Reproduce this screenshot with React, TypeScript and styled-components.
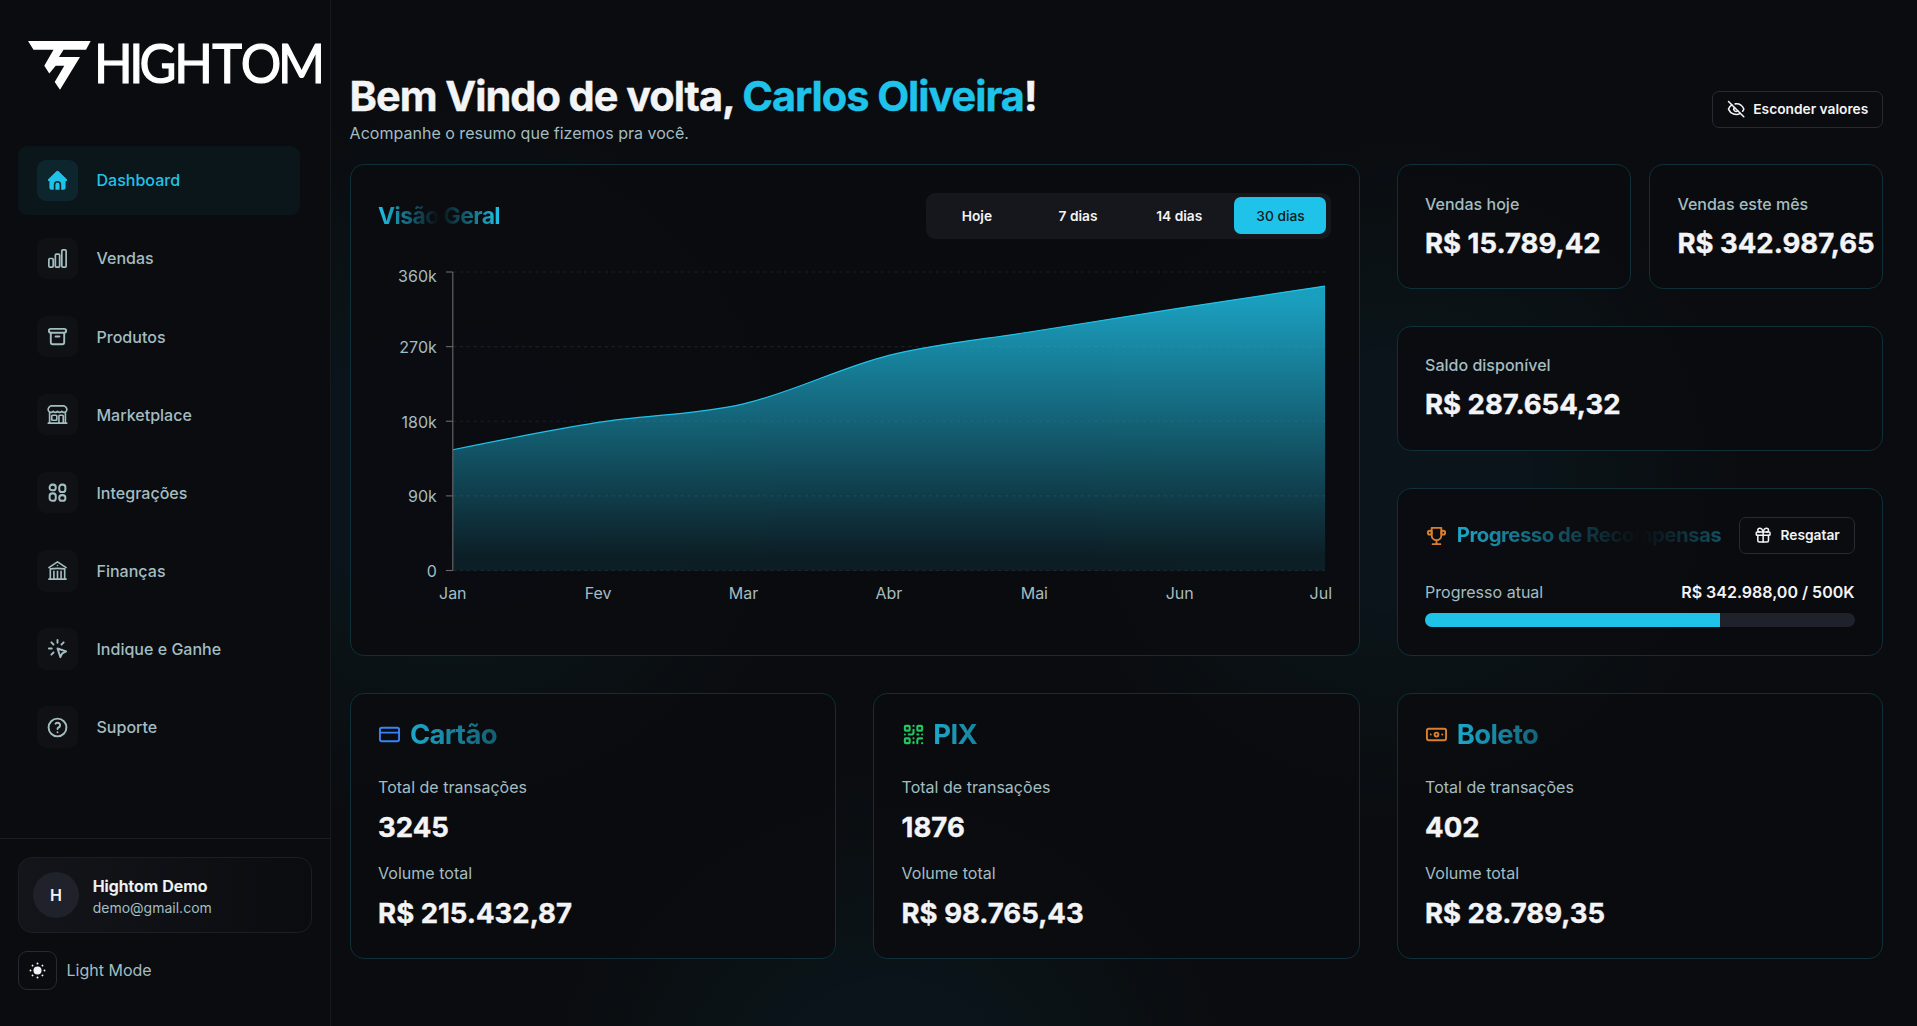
import React from 'react';
import styled, { createGlobalStyle } from 'styled-components';
import {
  HiOutlineBuildingLibrary,
  HiOutlineBuildingStorefront,
  HiOutlineChartBar,
} from 'react-icons/hi2';
import { CreditCard, EyeOff, Gift, QrCode, Banknote } from 'lucide-react';

const c = {
  bg: '#0a0c10',
  primary: '#1fc3ea',
  text: '#f3f4f6',
  muted: '#a3bdc1',
  border: '#282a34',
  cardBorder: '#0d3039',
};

const GlobalStyle = createGlobalStyle`
  * { box-sizing: border-box; }
  body {
    margin: 0;
    background: ${c.bg};
    color: ${c.text};
    font-family: Inter, 'Liberation Sans', sans-serif;
    -webkit-font-smoothing: antialiased;
    overflow: hidden;
  }
  h1, h2, p { margin: 0; }
  button { font-family: inherit; cursor: pointer; }
  svg { display: block; flex-shrink: 0; }
`;

const Shell = styled.div`
  display: flex;
  width: 100%;
  height: 1026px;
  background:
    radial-gradient(circle 340px at 890px 1111px, #0b131b 0%, #0b131b 38%, #0a1316 50%, rgba(10, 12, 16, 0) 100%),
    radial-gradient(circle 340px at 1400px 480px, #0b131b 0%, #0b131b 38%, #0a1316 50%, rgba(10, 12, 16, 0) 100%),
    radial-gradient(circle 360px at 450px 470px, #0b131b 0%, #0b131b 40%, #0a1316 52%, rgba(10, 12, 16, 0) 100%),
    ${c.bg};
`;

const Sidebar = styled.aside`
  width: 331px;
  flex-shrink: 0;
  display: flex;
  flex-direction: column;
  background: #0a0c0f;
  border-right: 1px solid #16191e;
`;

const Brand = styled.div`
  height: 146px;
  padding: 38px 0 0 26px;
`;

const Nav = styled.nav`
  flex: 1;
  display: flex;
  flex-direction: column;
  gap: 9.3px;
  padding: 0 30px 0 18px;
`;

const NavItem = styled.a<{ $active?: boolean }>`
  display: flex;
  align-items: center;
  gap: 18.4px;
  height: 68.8px;
  padding: 0 18.8px;
  border-radius: 9px;
  font-size: 16.05px;
  font-weight: 500;
  color: ${(p) => (p.$active ? c.primary : c.muted)};
  background: ${(p) => (p.$active ? '#0b161b' : 'transparent')};
`;

const NavIcon = styled.span<{ $active?: boolean }>`
  width: 41.3px;
  height: 41.3px;
  border-radius: 9px;
  display: flex;
  align-items: center;
  justify-content: center;
  background: ${(p) => (p.$active ? '#0d262e' : '#0f1115')};
`;

const SideFooter = styled.div`
  height: 188px;
  border-top: 1px solid #1b1e23;
  padding: 18px 18px 0;
`;

const UserCard = styled.div`
  display: flex;
  align-items: center;
  gap: 13.7px;
  height: 76px;
  padding: 0 14px;
  border: 1px solid #1c1e26;
  border-radius: 14px;
  background: linear-gradient(90deg, #13151a, #0a0c10);
`;

const Avatar = styled.span`
  width: 46px;
  height: 46px;
  border-radius: 50%;
  background: #20222b;
  display: flex;
  align-items: center;
  justify-content: center;
  font-size: 16px;
  font-weight: 600;
`;

const UserName = styled.p`
  padding-top: 3px;
  font-size: 16px;
  line-height: 21px;
  font-weight: 600;
  -webkit-text-stroke: 0.2px;
`;

const UserMail = styled.p`
  font-size: 14px;
  line-height: 21px;
  color: ${c.muted};
`;

const ThemeRow = styled.div`
  display: flex;
  align-items: center;
  gap: 9.5px;
  margin-top: 18px;
  font-size: 16px;
  color: ${c.muted};
`;

const ThemeLabel = styled.span`
  line-height: 20px;
  padding-bottom: 2px;
`;

const ThemeButton = styled.button`
  width: 39px;
  height: 39px;
  padding: 0;
  border: 1px solid ${c.border};
  border-radius: 9px;
  background: transparent;
  color: ${c.text};
  display: flex;
  align-items: center;
  justify-content: center;
`;

const Main = styled.main`
  flex: 1;
  padding: 73px 34px 0 18.6px;
`;

const Header = styled.header`
  display: flex;
  align-items: center;
  justify-content: space-between;
  height: 72.3px;
`;

const Title = styled.h1`
  font-size: 41.5px;
  line-height: 46px;
  font-weight: 700;
  letter-spacing: -0.025em;
  -webkit-text-stroke: 0.4px;
`;

const Accent = styled.span`
  color: ${c.primary};
`;

const Subtitle = styled.p`
  margin-top: 3px;
  font-size: 16.05px;
  line-height: 23px;
  color: ${c.muted};
`;

const OutlineButton = styled.button<{ $gap: number }>`
  height: 37px;
  display: flex;
  align-items: center;
  gap: ${(p) => p.$gap}px;
  padding: 0 13.75px;
  border: 1px solid ${c.border};
  border-radius: 7px;
  background: #0a0c10;
  color: ${c.text};
  font-size: 13.75px;
  font-weight: 600;
  white-space: nowrap;
`;

const Board = styled.div`
  display: grid;
  grid-template-columns: repeat(3, minmax(0, 1fr));
  grid-template-rows: 492px 265.5px;
  gap: 37px;
  margin-top: 19px;
`;

const Card = styled.section<{ $span?: number }>`
  grid-column: span ${(p) => p.$span ?? 1};
  min-width: 0;
  padding: 27.5px;
  border: 1px solid ${c.cardBorder};
  border-radius: 14px;
  background: rgba(10, 12, 15, 0.85);
`;

const SideStack = styled.div`
  display: grid;
  grid-template-columns: repeat(2, minmax(0, 1fr));
  grid-template-rows: 124.4px 125.6px 167.8px;
  row-gap: 37.1px;
  column-gap: 18.3px;
`;

const fade = `linear-gradient(90deg, ${c.primary}, ${c.bg} 50%, ${c.primary})`;

const FadeText = styled.span`
  color: transparent;
`;

const ChartHead = styled.div`
  display: flex;
  align-items: center;
  justify-content: space-between;
  height: 46px;
`;

const ChartTitle = styled.h2`
  font-size: 22.9px;
  line-height: 30px;
  font-weight: 700;
  letter-spacing: -0.025em;
  color: transparent;
  background: ${fade};
  background-clip: text;
`;

const Tabs = styled.div`
  display: grid;
  grid-template-columns: repeat(4, 92px);
  gap: 9.2px;
  padding: 4.6px;
  border-radius: 9px;
  background: #15171c;
`;

const Tab = styled.button<{ $active?: boolean }>`
  height: 36.7px;
  padding: 0;
  border: 0;
  border-radius: 7px;
  font-size: 13.75px;
  font-weight: ${(p) => (p.$active ? 500 : 600)};
  color: ${(p) => (p.$active ? '#0a1a20' : c.text)};
  background: ${(p) => (p.$active ? c.primary : 'transparent')};
`;

const ChartBox = styled.div`
  margin-top: 18px;
`;

const FadeRow = styled.div<{ $size: number; $height: number; $mb: number }>`
  display: flex;
  align-items: center;
  gap: 8.8px;
  height: ${(p) => p.$height}px;
  margin-bottom: ${(p) => p.$mb}px;
  font-size: ${(p) => p.$size}px;
  line-height: 1.2;
  font-weight: 700;
  letter-spacing: -0.025em;
  white-space: nowrap;
  background: ${fade};
  background-clip: text;
`;

const PushRight = styled.div`
  margin-left: auto;
  letter-spacing: 0;
`;

const Label = styled.p<{ $medium?: boolean }>`
  font-size: 16.05px;
  line-height: 23px;
  font-weight: ${(p) => (p.$medium ? 500 : 400)};
  color: ${c.muted};
`;

const Value = styled.p`
  margin-top: 9.2px;
  font-size: 27.5px;
  line-height: 36.7px;
  font-weight: 700;
  white-space: nowrap;
  -webkit-text-stroke: 0.4px;
`;

const Metric = styled.div`
  & + & { margin-top: 17px; }
`;

const MetricValue = styled(Value)`
  margin-top: 9.5px;
`;

const ProgressRow = styled.div`
  display: flex;
  justify-content: space-between;
`;

const ProgressValue = styled.span`
  font-size: 16px;
  line-height: 23px;
  font-weight: 600;
`;

const Track = styled.div`
  margin-top: 8.6px;
  height: 14px;
  border-radius: 7px;
  background: #20222b;
  overflow: hidden;
`;

const Fill = styled.div`
  height: 100%;
  background: ${c.primary};
`;

const HomeIcon = () => (
  <svg width="21" height="21" viewBox="0 0 21 21" fill="currentColor">
    <path d="M9.4 1.3a1.6 1.6 0 0 1 2.200 0l8.200 7.900c.8.8.2 1.900-.8 1.900h-.4v6.600a2 2 0 0 1-2 2h-2.400v-5a3.700 3.700 0 0 0-7.400 0v5H4.400a2 2 0 0 1-2-2v-6.600H2c-1 0-1.600-1.100-.8-1.900z" />
    <path d="M8.400 19.700v-5a2.100 2.100 0 0 1 4.200 0v5z" />
  </svg>
);

const StrokeIcon = ({ children, color = 'currentColor' }: { children: React.ReactNode; color?: string }) => (
  <svg
    width="23"
    height="23"
    viewBox="0 0 24 24"
    fill="none"
    stroke={color}
    strokeWidth="2"
    strokeLinecap="round"
    strokeLinejoin="round"
  >
    {children}
  </svg>
);

const ArchiveIcon = () => (
  <StrokeIcon>
    <rect x="3" y="4" width="18" height="4" rx="2" />
    <path d="M5 8v10a2 2 0 0 0 2 2h10a2 2 0 0 0 2-2V8" />
    <path d="M10 12h4" />
  </StrokeIcon>
);

const ClickIcon = () => (
  <StrokeIcon>
    <path d="M3 12h3M12 3v3M7.800 7.800L5.600 5.600M16.200 7.800l2.200-2.200M7.800 16.200l-2.200 2.200" />
    <path d="M12 12l9 3-4 2-2 4z" />
  </StrokeIcon>
);

const HelpIcon = () => (
  <StrokeIcon>
    <circle cx="12" cy="12" r="9.300" />
    <path d="M12 17v.01M12 13.500a1.500 1.500 0 0 1 1-1.500 2.600 2.600 0 1 0-3-4" />
  </StrokeIcon>
);

const TrophyIcon = () => (
  <StrokeIcon color="#d97f30">
    <path d="M8 21h8M12 17v4M7 4h10M17 4v8a5 5 0 0 1-10 0V4" />
    <circle cx="5" cy="9" r="2" />
    <circle cx="19" cy="9" r="2" />
  </StrokeIcon>
);

const WidgetIcon = () => (
  <svg width="21" height="21" viewBox="0 0 24 24" fill="none" stroke="currentColor" strokeWidth="2.300">
    <rect x="3" y="3" width="7" height="6.500" rx="3" />
    <rect x="14" y="3" width="7" height="8.500" rx="3" />
    <rect x="3" y="13" width="7" height="8.500" rx="3" />
    <rect x="14" y="15" width="7" height="6.500" rx="3" />
  </svg>
);

const SunIcon = () => (
  <svg width="17" height="17" viewBox="0 0 17 17" fill="currentColor">
    <circle cx="8.500" cy="8.500" r="4" />
    {[0, 45, 90, 135, 180, 225, 270, 315].map((a) => (
      <circle key={a} cx="8.500" cy="1.500" r="0.950" transform={`rotate(${a} 8.500 8.500)`} />
    ))}
  </svg>
);

const Logo = () => (
  <svg width="300" height="56" viewBox="26 38 300 56" fill="#fff">
    <path d="M28 41H90.700L86 49.700H63.500L59 57H80L60 89.800L54.700 82L64.300 65.700H55.700L49.300 73.500L44.300 65.700L53.500 49.700H33.500Z" />
    <text
      transform="translate(0 82.600) scale(0.930 1)"
      x="101.200 138.900 150 187.400 228.300 258.900 299"
      y="0"
      fontFamily="Lato, sans-serif"
      fontSize="54.500"
      stroke="#fff"
      strokeWidth="1.200"
    >
      HIGHTOM
    </text>
  </svg>
);

const navItems = [
  { label: 'Dashboard', icon: <HomeIcon />, active: true },
  { label: 'Vendas', icon: <HiOutlineChartBar size={23} strokeWidth={1.8} /> },
  { label: 'Produtos', icon: <ArchiveIcon /> },
  { label: 'Marketplace', icon: <HiOutlineBuildingStorefront size={23} strokeWidth={1.7} /> },
  { label: 'Integrações', icon: <WidgetIcon /> },
  { label: 'Finanças', icon: <HiOutlineBuildingLibrary size={23} strokeWidth={1.7} /> },
  { label: 'Indique e Ganhe', icon: <ClickIcon /> },
  { label: 'Suporte', icon: <HelpIcon /> },
];

const series = [
  { month: 'Jan', value: 145700 },
  { month: 'Fev', value: 178600 },
  { month: 'Mar', value: 201000 },
  { month: 'Abr', value: 259500 },
  { month: 'Mai', value: 288500 },
  { month: 'Jun', value: 316500 },
  { month: 'Jul', value: 342988 },
];

const plot = { left: 74.8, top: 15, width: 872.3, height: 298.5 };

/* Monotone cubic path through evenly spaced points. */
function monotonePath(pts: { x: number; y: number }[]) {
  const n = pts.length;
  const s = pts.slice(1).map((p, i) => (p.y - pts[i].y) / (p.x - pts[i].x));
  const t = pts.map((_, i) => {
    if (i === 0 || i === n - 1) return 0;
    const avg = (s[i - 1] + s[i]) / 2;
    return (Math.sign(s[i - 1]) + Math.sign(s[i])) * Math.min(Math.abs(s[i - 1]), Math.abs(s[i]), 0.5 * Math.abs(avg));
  });
  t[0] = (3 * s[0] - t[1]) / 2;
  t[n - 1] = (3 * s[n - 2] - t[n - 2]) / 2;
  return pts.slice(1).reduce((d, p, i) => {
    const q = pts[i];
    const dx = (p.x - q.x) / 3;
    return `${d}C${q.x + dx},${q.y + dx * t[i]} ${p.x - dx},${p.y - dx * t[i + 1]} ${p.x},${p.y}`;
  }, `M${pts[0].x},${pts[0].y}`);
}

const AreaChart = () => {
  const { left, top, width, height } = plot;
  const pts = series.map((d, i) => ({
    x: left + (width * i) / (series.length - 1),
    y: top + height * (1 - d.value / 360000),
  }));
  const line = monotonePath(pts);
  return (
    <svg width="956" height="366" fontSize="16" fill={c.muted}>
      <defs>
        <linearGradient id="area" x1="0" y1="0" x2="0" y2="1">
          <stop offset="5%" stopColor={c.primary} stopOpacity="0.800" />
          <stop offset="95%" stopColor={c.primary} stopOpacity="0.100" />
        </linearGradient>
      </defs>
      {[360, 270, 180, 90, 0].map((v, i) => {
        const y = top + (height * i) / 4;
        return (
          <g key={v}>
            <line x1={left} x2={left + width} y1={y} y2={y} stroke="#1c1e24" strokeWidth="1.150" strokeDasharray="3.450 3.450" />
            <line x1={left - 6.900} x2={left} y1={y} y2={y} stroke="#666" strokeWidth="1.150" />
            <text x={left - 16} y={y + (i === 0 ? 10 : 6.300)} textAnchor="end">{v ? `${v}k` : '0'}</text>
          </g>
        );
      })}
      <path d={`${line}V${top + height}H${left}Z`} fill="url(#area)" />
      <path d={line} fill="none" stroke={c.primary} strokeWidth="1.150" />
      <line x1={left} x2={left} y1={top} y2={top + height} stroke="#666" strokeWidth="1.150" />
      {pts.map((p, i) => {
        const last = i === pts.length - 1;
        return (
          <text key={series[i].month} x={last ? 954 : p.x} y="341.700" textAnchor={last ? 'end' : 'middle'}>
            {series[i].month}
          </text>
        );
      })}
    </svg>
  );
};

const methods = [
  { name: 'Cartão', icon: <CreditCard size={23} color="#3b82f6" />, count: '3245', volume: 'R$ 215.432,87' },
  { name: 'PIX', icon: <QrCode size={23} strokeWidth={2.2} color="#22c55e" />, count: '1876', volume: 'R$ 98.765,43' },
  { name: 'Boleto', icon: <Banknote size={23} color="#d97f30" />, count: '402', volume: 'R$ 28.789,35' },
];

export default function App() {
  return (
    <>
      <GlobalStyle />
      <Shell>
        <Sidebar>
          <Brand>
            <Logo />
          </Brand>
          <Nav>
            {navItems.map((item) => (
              <NavItem key={item.label} $active={item.active}>
                <NavIcon $active={item.active}>{item.icon}</NavIcon>
                {item.label}
              </NavItem>
            ))}
          </Nav>
          <SideFooter>
            <UserCard>
              <Avatar>H</Avatar>
              <div>
                <UserName>Hightom Demo</UserName>
                <UserMail>demo@gmail.com</UserMail>
              </div>
            </UserCard>
            <ThemeRow>
              <ThemeButton aria-label="Light Mode">
                <SunIcon />
              </ThemeButton>
              <ThemeLabel>Light Mode</ThemeLabel>
            </ThemeRow>
          </SideFooter>
        </Sidebar>
        <Main>
          <Header>
            <div>
              <Title>
                Bem Vindo de volta, <Accent>Carlos Oliveira</Accent>!
              </Title>
              <Subtitle>Acompanhe o resumo que fizemos pra você.</Subtitle>
            </div>
            <OutlineButton $gap={8.4}>
              <EyeOff size={18.3} />
              Esconder valores
            </OutlineButton>
          </Header>
          <Board>
            <Card $span={2}>
              <ChartHead>
                <ChartTitle>Visão Geral</ChartTitle>
                <Tabs>
                  <Tab>Hoje</Tab>
                  <Tab>7 dias</Tab>
                  <Tab>14 dias</Tab>
                  <Tab $active>30 dias</Tab>
                </Tabs>
              </ChartHead>
              <ChartBox>
                <AreaChart />
              </ChartBox>
            </Card>
            <SideStack>
              <Card>
                <Label $medium>Vendas hoje</Label>
                <Value>R$ 15.789,42</Value>
              </Card>
              <Card>
                <Label $medium>Vendas este mês</Label>
                <Value>R$ 342.987,65</Value>
              </Card>
              <Card $span={2}>
                <Label $medium>Saldo disponível</Label>
                <Value>R$ 287.654,32</Value>
              </Card>
              <Card $span={2}>
                <FadeRow $size={20.35} $height={36.7} $mb={27.4}>
                  <TrophyIcon />
                  <FadeText>Progresso de Recompensas</FadeText>
                  <PushRight>
                    <OutlineButton $gap={8.6}>
                      <Gift size={18.3} />
                      Resgatar
                    </OutlineButton>
                  </PushRight>
                </FadeRow>
                <ProgressRow>
                  <Label>Progresso atual</Label>
                  <ProgressValue>R$ 342.988,00 / 500K</ProgressValue>
                </ProgressRow>
                <Track>
                  <Fill style={{ width: `${(342988 / 500000) * 100}%` }} />
                </Track>
              </Card>
            </SideStack>
            {methods.map((m) => (
              <Card key={m.name}>
                <FadeRow $size={27.5} $height={25} $mb={29.4}>
                  {m.icon}
                  <FadeText>{m.name}</FadeText>
                </FadeRow>
                <Metric>
                  <Label>Total de transações</Label>
                  <MetricValue>{m.count}</MetricValue>
                </Metric>
                <Metric>
                  <Label>Volume total</Label>
                  <MetricValue>{m.volume}</MetricValue>
                </Metric>
              </Card>
            ))}
          </Board>
        </Main>
      </Shell>
    </>
  );
}
